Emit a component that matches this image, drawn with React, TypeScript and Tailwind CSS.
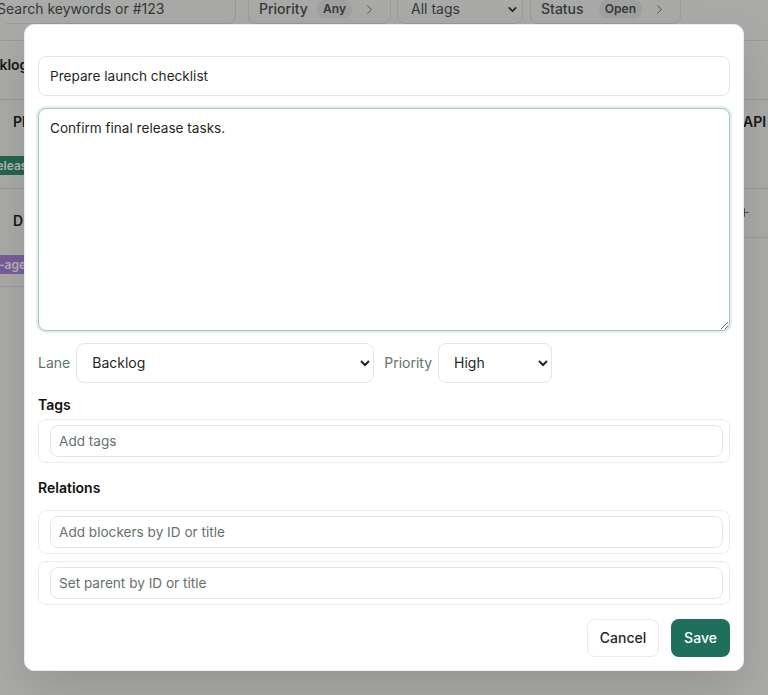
import { ChevronRight, ChevronDown, Plus } from "lucide-react";

const font = "font-['Inter','Liberation_Sans',sans-serif]";

function FilterBox({ label, value }: { label: string; value: string }) {
  return (
    <div className="flex h-[40px] items-center justify-between rounded-b-lg border border-[#dddedb] pl-[10px] pr-[13px] pt-[10px] text-sm text-[#4b5552]">
      <span className="font-medium">{label}</span>
      <span className="ml-auto rounded-lg bg-[#e6e7e5] px-[6px] py-[1px] text-xs font-semibold">{value}</span>
      <ChevronRight className="ml-[10px] size-[15px] text-[#6b7572]" strokeWidth={1.5} />
    </div>
  );
}

function FieldRow({ placeholder }: { placeholder: string }) {
  return (
    <div className="rounded-lg border border-[#ececea] pb-[5px] pl-[11px] pr-[6px] pt-[5px]">
      <input
        placeholder={placeholder}
        className="block h-[32px] w-full rounded-lg border border-[#e4e5e3] bg-white px-2 text-[13.6px] text-[#1f2725] outline-none placeholder:text-[#66716d]"
      />
    </div>
  );
}

function Board() {
  return (
    <div className="w-[768px] text-[#1f2725]">
      {/* filter row, scrolled past the top of the page */}
      <div className="-mt-[16px] flex h-[56px] items-start">
        <div className="flex h-[40px] w-[236px] items-center rounded-b-lg border-r border-b border-[#dddedb] pt-[10px] text-sm text-[#4b5552]">
          <span className="-ml-[3px] whitespace-nowrap">Search keywords or #123</span>
        </div>
        <div className="ml-[12px] w-[143px]">
          <FilterBox label="Priority" value="Any" />
        </div>
        <div className="ml-[6px] flex h-[40px] w-[126px] items-center justify-between rounded-b-lg border border-[#dddedb] pl-[13px] pr-[3px] pt-[10px] text-sm text-[#4b5552]">
          <span>All tags</span>
          <ChevronDown className="size-[13px] text-[#2b3331]" strokeWidth={3} />
        </div>
        <div className="ml-[7px] w-[151px]">
          <FilterBox label="Status" value="Open" />
        </div>
      </div>
      {/* lane header */}
      <div className="flex h-[60px] items-center overflow-hidden border-y border-[#dddedb] pb-[10px] text-sm font-semibold">
        <span className="-ml-[26px]">Backlog</span>
      </div>
      <div className="flex">
        <div className="w-[24px] overflow-hidden">
          <div className="h-[89px] border-b border-[#dddedb] pl-[13px] pt-[13px]">
            <div className="w-[60px] text-sm font-semibold leading-[18px]">Pl</div>
            <div className="-ml-[13px] mt-[25px] h-[19px] w-[60px] overflow-hidden whitespace-nowrap bg-[#35906f] text-xs font-semibold leading-[20px] text-white">
              <span className="-ml-[8px] inline-block">release</span>
            </div>
          </div>
          <div className="h-[98px] border-b border-[#dddedb] pl-[13px] pt-[23px]">
            <div className="w-[60px] text-sm font-semibold leading-[18px]">D</div>
            <div className="-ml-[13px] mt-[25px] h-[19px] w-[60px] overflow-hidden whitespace-nowrap bg-[#ae86e0] text-xs font-semibold leading-[20px] text-white">
              <span className="-ml-[1px] inline-block">-agent</span>
            </div>
          </div>
        </div>
        <div className="ml-auto w-[25px] overflow-hidden">
          <div className="h-[89px] border-b border-[#dddedb] pt-[13px] text-sm font-semibold leading-[18px]">API</div>
          <div className="flex h-[49px] items-start border-b border-[#dddedb] pt-[17px]">
            <Plus className="-ml-[5px] size-[13px] text-[#4b5552]" strokeWidth={1.5} />
          </div>
        </div>
      </div>
    </div>
  );
}

export default function App() {
  return (
    <div className={`relative h-[695px] w-[768px] overflow-hidden bg-[#f4f4f1] ${font}`}>
      <Board />
      <div className="absolute inset-0 bg-black/30" />
      <div className="absolute left-[24px] top-[24px] flex h-[647px] w-[720px] flex-col rounded-[10px] border border-[#ececea] bg-white px-[13px] pb-[12px] pt-[31px] shadow-[0_20px_50px_rgba(0,0,0,0.12)]">
        <input
          defaultValue="Prepare launch checklist"
          className="h-[40px] w-full shrink-0 rounded-lg border border-[#e4e5e3] bg-white px-[11px] text-[13.6px] text-[#1f2725] outline-none"
        />
        <textarea
          defaultValue="Confirm final release tasks."
          className="mt-[12px] h-[223px] w-full shrink-0 rounded-lg border border-[#9fcabd] bg-white px-[11px] py-[11px] text-[13.6px] leading-[17px] text-[#1f2725] shadow-[0_0_0_2px_#e6efec] outline-none"
        />
        <div className="mt-[12px] flex items-center text-sm text-[#66716d]">
          <label>Lane</label>
          <select
            defaultValue="Backlog"
            className="ml-[6px] h-[40px] w-[298px] rounded-lg border border-[#e4e5e3] bg-white px-[11px] pb-[1px] text-sm text-[#1f2725] outline-none"
          >
            <option>Backlog</option>
            <option>In progress</option>
            <option>Done</option>
          </select>
          <label className="ml-[10px]">Priority</label>
          <select
            defaultValue="High"
            className="ml-[6px] h-[40px] w-[114px] rounded-lg border border-[#e4e5e3] bg-white px-[11px] pb-[1px] text-sm text-[#1f2725] outline-none"
          >
            <option>Low</option>
            <option>Medium</option>
            <option>High</option>
          </select>
        </div>
        <h3 className="mt-[13px] text-sm font-semibold leading-[17px] text-[#111]">Tags</h3>
        <div className="mt-[6px]">
          <FieldRow placeholder="Add tags" />
        </div>
        <h3 className="mt-[16px] text-sm font-semibold leading-[17px] text-[#111]">Relations</h3>
        <div className="mt-[14px] flex flex-col gap-[7px]">
          <FieldRow placeholder="Add blockers by ID or title" />
          <FieldRow placeholder="Set parent by ID or title" />
        </div>
        <div className="mt-[14px] flex justify-end gap-[12px]">
          <button className="h-[38px] w-[72px] rounded-lg border border-[#e9e9e7] bg-white text-sm font-medium text-[#1f2725]">
            Cancel
          </button>
          <button className="h-[38px] w-[59px] rounded-lg bg-[#206f5c] text-sm font-medium text-white">Save</button>
        </div>
      </div>
    </div>
  );
}
